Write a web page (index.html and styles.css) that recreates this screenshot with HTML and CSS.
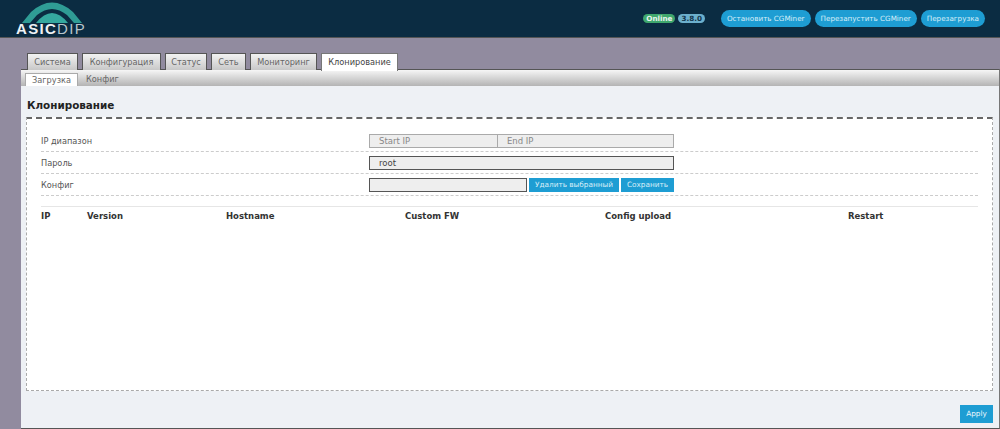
FILE: index.html
```html
<!DOCTYPE html>
<html>
<head>
<meta charset="utf-8">
<title>Клонирование</title>
<link rel="stylesheet" href="styles.css">
</head>
<body>

<div class="header">
	<div class="logo">
		<svg class="logo-arc" width="66" height="24" viewBox="0 0 66 24">
			<path d="M3 23 L12 12 Q33 -7 54 12 L63 23 L55 23 L48 15 Q33 3 18 15 L11 23 Z" fill="#2f9c95"/>
			<path d="M17 23 Q33 3 49 23 Z" fill="#35a89f"/>
		</svg>
		<div class="logo-text"><b>ASIC</b>DIP</div>
	</div>
	<div class="status">
		<span class="badge online">Online</span>
		<span class="badge version">3.8.0</span>
		<a class="pill first">Остановить CGMiner</a>
		<a class="pill">Перезапустить CGMiner</a>
		<a class="pill">Перезагрузка</a>
	</div>
</div>

<div class="main">
	<ul class="tabs">
		<li>Система</li>
		<li>Конфигурация</li>
		<li>Статус</li>
		<li>Сеть</li>
		<li>Мониторинг</li>
		<li class="active">Клонирование</li>
	</ul>
	<div class="content">
		<ul class="subtabs">
			<li class="active">Загрузка</li>
			<li>Конфиг</li>
		</ul>
		<div class="panel">
			<h2>Клонирование</h2>
			<div class="box">
				<div class="row">
					<label>IP диапазон</label>
					<div class="field">
						<input class="ip-start" type="text" placeholder="Start IP">
						<input class="ip-end" type="text" placeholder="End IP">
					</div>
				</div>
				<div class="row">
					<label>Пароль</label>
					<div class="field">
						<input class="dark wide" type="text" value="root">
					</div>
				</div>
				<div class="row">
					<label>Конфиг</label>
					<div class="field">
						<input class="dark config" type="text">
						<a class="btn del">Удалить выбранный</a>
						<a class="btn save">Сохранить</a>
					</div>
				</div>
				<table class="clone-table">
					<tr>
						<th class="c1">IP</th>
						<th class="c2">Version</th>
						<th class="c3">Hostname</th>
						<th class="c4">Custom FW</th>
						<th class="c5">Config upload</th>
						<th class="c6">Restart</th>
					</tr>
				</table>
			</div>
			<div class="actions"><a class="btn apply">Apply</a></div>
		</div>
	</div>
</div>

</body>
</html>
```

FILE: styles.css
```css
html,body{
	margin: 0;
	height: 100%;
}
body{
	background: #918b9f;
	font-family: "DejaVu Sans", Verdana, sans-serif;
	font-size: 8.2px;
	color: #555;
	overflow: hidden;
}
.header{
	height: 38px;
	background: #0b2c42;
	border-bottom: 1px solid #555;
	box-sizing: border-box;
	display: flex;
	justify-content: space-between;
	align-items: center;
}
.logo{
	width: 80px;
	height: 37px;
	margin-left: 16px;
	position: relative;
}
.logo-arc{
	position: absolute;
	left: 3px;
	top: 0;
}
.logo-text{
	position: absolute;
	left: 0;
	top: 23px;
	font-family: "Liberation Sans", Arial, sans-serif;
	font-size: 15px;
	line-height: 11px;
	letter-spacing: 1.3px;
	color: #b9c6cd;
}
.logo-text b{
	color: #eef2f4;
}
.status{
	display: flex;
	align-items: center;
	margin-right: 15px;
}
.badge{
	font-size: 7.2px;
	font-weight: bold;
	line-height: 9px;
	padding: 0 3px;
	border-radius: 5px;
	color: #e8f3ee;
}
.online{
	background: #3fa76d;
	margin-right: 3px;
}
.version{
	background: #6cb0cd;
	color: #12344a;
}
.pill{
	background: #1e9dd3;
	color: #d8eef8;
	font-size: 7.2px;
	line-height: 17px;
	padding: 0 6px;
	border-radius: 9px;
	margin-left: 4px;
}
.pill.first{
	margin-left: 16px;
}
.main{
	padding: 15px 0 0 21px;
}
.tabs,.subtabs{
	list-style: none;
	margin: 0;
	padding: 0;
	display: flex;
}
.tabs{
	height: 17px;
	padding-left: 6px;
	gap: 4px;
}
.tabs li{
	height: 17px;
	line-height: 17px;
	text-align: center;
	color: #666;
	background: linear-gradient(#f2f2f2, #c8c8c8);
	border: 1px solid #555;
	border-bottom: 0;
	box-sizing: border-box;
}
.tabs li:nth-child(1){ width: 51px; }
.tabs li:nth-child(2){ width: 79px; }
.tabs li:nth-child(3){ width: 42px; }
.tabs li:nth-child(4){ width: 35px; }
.tabs li:nth-child(5){ width: 67px; }
.tabs li:nth-child(6){ width: 77px; }
.tabs li.active{
	background: #fff;
	color: #444;
	border-color: #777;
	height: 18px;
	position: relative;
}
.content{
	height: 360px;
	background: #eef1f5;
	box-sizing: border-box;
	border-top: 1px solid #555;
	border-right: 1px solid #777;
	border-bottom: 1px solid #555;
	margin-top: -1px;
}
.subtabs{
	height: 16px;
	padding: 3px 0 0 4px;
	box-sizing: border-box;
	background: linear-gradient(#f6f6f6, #b4b4b4);
}
.subtabs li{
	height: 13px;
	line-height: 13px;
	padding: 0 8px;
	color: #666;
	box-sizing: border-box;
}
.subtabs li.active{
	width: 53px;
	padding: 0;
	text-align: center;
	background: #fff;
	border: 1px solid #aaa;
	border-bottom: 0;
	line-height: 12px;
}
.panel{
	padding: 0 6px 0 5px;
}
.panel h2{
	margin: 0;
	font-size: 10.4px;
	font-weight: bold;
	color: #222;
	line-height: 13px;
	padding: 13px 0 0 1px;
	height: 31px;
	box-sizing: border-box;
}
.box{
	height: 274px;
	box-sizing: border-box;
	background: #fff;
	border: 1px dashed #aaa;
	border-top: 2px dashed #666;
	padding: 11px 14px 0;
}
.row{
	display: flex;
	align-items: center;
	height: 22px;
	border-bottom: 1px dashed #ccc;
	box-sizing: border-box;
}
.row label{
	width: 328px;
}
.field{
	display: flex;
	align-items: center;
}
input{
	font-family: "DejaVu Sans", Verdana, sans-serif;
	font-size: 8.5px;
	height: 14px;
	box-sizing: border-box;
	background: #eee;
	margin: 0;
	padding: 0 0 0 9px;
	border: 1px solid #aaa;
	color: #444;
	border-radius: 0;
	outline: none;
}
input::placeholder{
	color: #888;
}
.ip-start{
	width: 129px;
}
.ip-end{
	width: 177px;
	margin-left: -1px;
}
.dark{
	border-color: #555;
}
.wide{
	width: 305px;
}
.config{
	width: 158px;
}
.btn{
	background: #1e9dd3;
	color: #d8eef8;
	font-size: 7.3px;
	line-height: 14px;
	text-align: center;
	margin-left: 2px;
}
.del{
	width: 90px;
}
.save{
	width: 53px;
}
.clone-table{
	width: 100%;
	margin-top: 10px;
	border-collapse: collapse;
	border-top: 1px solid #e6e6e6;
	table-layout: fixed;
}
.clone-table th{
	text-align: left;
	font-size: 8.5px;
	font-weight: bold;
	color: #333;
	padding: 4px 0 0;
	line-height: 11px;
}
.c1{ width: 46px; }
.c2{ width: 139px; }
.c3{ width: 179px; }
.c4{ width: 200px; }
.c5{ width: 243px; }
.actions{
	display: flex;
	justify-content: flex-end;
	padding-top: 14px;
}
.btn.apply{
	line-height: 18px;
	width: 33px;
	color: #eaf6fb;
}
```
